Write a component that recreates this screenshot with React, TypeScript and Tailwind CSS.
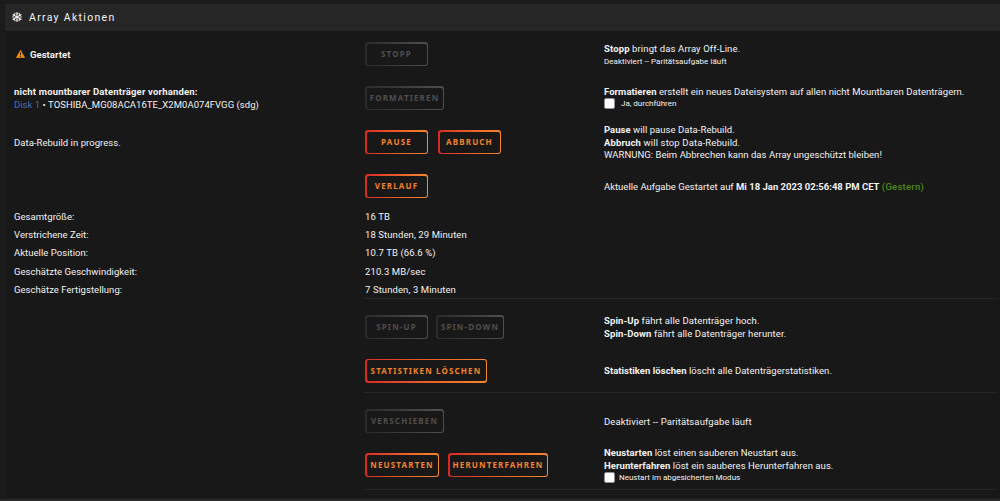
import * as React from "react";
import { clsx } from "clsx";

interface ActionButtonProps {
  children: string;
  width: string;
  disabled?: boolean;
  className?: string;
}

function ActionButton({ children, width, disabled, className }: ActionButtonProps) {
  return (
    <button
      type="button"
      disabled={disabled}
      className={clsx(
        "h-6 shrink-0 rounded-[3px] bg-linear-to-r p-[1.5px] font-['Noto_Sans',sans-serif]",
        disabled ? "from-[#2b2a29] to-[#4f4f4f]" : "from-[#d92626] to-[#f5872d]",
        width,
        className
      )}
    >
      <span
        className={clsx(
          "flex h-full items-center justify-center rounded-[2px] bg-[#191818] text-[8px] leading-none font-bold tracking-[1.15px] whitespace-nowrap",
          disabled ? "text-[#4f4f4f]" : "text-[#f5832b]"
        )}
      >
        {children}
      </span>
    </button>
  );
}

interface RowProps {
  height: string;
  label?: React.ReactNode;
  actions?: React.ReactNode;
  children?: React.ReactNode;
}

function Row({ height, label, actions, children }: RowProps) {
  return (
    <div className={clsx("grid grid-cols-[351px_239px_1fr] items-center whitespace-nowrap", height)}>
      <div>{label}</div>
      <div className="flex items-center">{actions}</div>
      <div>{children}</div>
    </div>
  );
}

function Divider() {
  return <div className="ml-[350px] h-px bg-[#262525]" />;
}

function Checkbox({ label, gap }: { label: string; gap: string }) {
  return (
    <label className={clsx("flex h-3 items-center text-[8px] leading-3 tracking-normal", gap)}>
      <span className="size-[11px] rounded-[2px] border border-[#8f8f9d] bg-white" />
      {label}
    </label>
  );
}

const stats = [
  { label: "Gesamtgröße:", value: "16 TB" },
  { label: "Verstrichene Zeit:", value: "18 Stunden, 29 Minuten" },
  { label: "Aktuelle Position:", value: "10.7 TB (66.6 %)" },
  { label: "Geschätzte Geschwindigkeit:", value: "210.3 MB/sec" },
  { label: "Geschätze Fertigstellung:", value: "7 Stunden, 3 Minuten" },
];

export default function App() {
  return (
    <div className="h-[501px] w-[1000px] overflow-hidden bg-[#1c1b1b] pt-1 pl-[5px] font-[Roboto,sans-serif] text-[9.5px] leading-[13px] tracking-[0.04px] text-[#f2f2f2]">
      <div className="h-[494px] bg-[#191818]">
        <header className="flex h-[27px] items-center gap-[7px] bg-[#262626] pb-px pl-[7px] text-[10.5px] leading-[14px] tracking-[1.3px]">
          <svg viewBox="0 0 20 20" className="size-[10px]" fill="none" stroke="currentColor" strokeWidth="2">
            {[0, 60, 120].map((angle) => (
              <path
                key={angle}
                transform={`rotate(${angle} 10 10)`}
                d="M10 0v20M6.500 1.500 10 5l3.500-3.500M6.500 18.500 10 15l3.500 3.500"
              />
            ))}
          </svg>
          <span className="pt-px">Array Aktionen</span>
        </header>

        <div className="pr-[2px] pl-[9px]">
          <Row
            height="h-[46px]"
            label={
              <div className="flex items-center gap-[5px] pl-[2px]">
                <svg viewBox="0 0 18 16" className="h-[8px] w-[9px]">
                  <path d="M9 0.500 17.500 15.500H0.500Z" fill="#ff9100" stroke="#ff9100" strokeLinejoin="round" />
                  <path d="M8 5h2v5.500H8zM8 12h2v2H8z" fill="#191818" />
                </svg>
                <b>Gestartet</b>
              </div>
            }
            actions={<ActionButton width="w-[63px]" disabled>STOPP</ActionButton>}
          >
            <p className="pt-px tracking-[0.12px]"><b>Stopp</b> bringt das Array Off-Line.</p>
            <p className="text-[8px]">Deaktiviert -- Paritätsaufgabe läuft</p>
          </Row>
          <Row
            height="h-[42px]"
            label={
              <>
                <p className="tracking-[0.18px]"><b>nicht mountbarer Datenträger vorhanden:</b></p>
                <p><span className="text-[#486dba]">Disk 1</span> • TOSHIBA_MG08ACA16TE_X2M0A074FVGG (sdg)</p>
              </>
            }
            actions={<ActionButton width="w-[79px]" disabled>FORMATIEREN</ActionButton>}
          >
            <div className="-mt-[2px]">
              <p className="tracking-[0.05px]"><b>Formatieren</b> erstellt ein neues Dateisystem auf allen nicht Mountbaren Datenträgern.</p>
              <Checkbox label="Ja, durchführen" gap="gap-[6px]" />
            </div>
          </Row>
          <Row
            height="h-[46px]"
            label="Data-Rebuild in progress."
            actions={
              <>
                <ActionButton width="w-[63px]">PAUSE</ActionButton>
                <ActionButton width="w-[63px]" className="ml-[10px]">ABBRUCH</ActionButton>
              </>
            }
          >
            <p><b>Pause</b> will pause Data-Rebuild.</p>
            <p className="tracking-[0.13px]"><b>Abbruch</b> will stop Data-Rebuild.</p>
            <p className="leading-3">WARNUNG: Beim Abbrechen kann das Array ungeschützt bleiben!</p>
          </Row>
          <Row height="h-[42px]" actions={<ActionButton width="w-[63px]">VERLAUF</ActionButton>}>
            <p className="tracking-normal">
              Aktuelle Aufgabe Gestartet auf <b>Mi 18 Jan 2023 02:56:48 PM CET</b>{" "}
              <span className="font-medium tracking-[0.25px] text-[#4f8a10]">(Gestern)</span>
            </p>
          </Row>

          <div className="h-[91px]">
            {stats.map(({ label, value }) => (
              <Row key={label} height="h-[18.300px]" label={label} actions={<span className="tracking-[0.1px]">{value}</span>} />
            ))}
          </div>

          <Divider />
          <Row
            height="h-[56px]"
            actions={
              <>
                <ActionButton width="w-[63px]" disabled>SPIN-UP</ActionButton>
                <ActionButton width="w-[68px]" className="ml-2" disabled>SPIN-DOWN</ActionButton>
              </>
            }
          >
            <p className="tracking-[0.1px]"><b>Spin-Up</b> fährt alle Datenträger hoch.</p>
            <p className="tracking-[0.1px]"><b>Spin-Down</b> fährt alle Datenträger herunter.</p>
          </Row>
          <Row height="h-[31px]" actions={<ActionButton width="w-[122px]">STATISTIKEN LÖSCHEN</ActionButton>}>
            <p><b>Statistiken löschen</b> löscht alle Datenträgerstatistiken.</p>
          </Row>
          <div className="h-[6px]" />
          <Divider />
          <Row height="h-[56px]" actions={<ActionButton width="w-[79px]" disabled>VERSCHIEBEN</ActionButton>}>
            <p className="tracking-[0.1px]">Deaktiviert -- Paritätsaufgabe läuft</p>
          </Row>
          <Row
            height="h-8"
            actions={
              <>
                <ActionButton width="w-[74px]">NEUSTARTEN</ActionButton>
                <ActionButton width="w-[100px]" className="ml-[9px]">HERUNTERFAHREN</ActionButton>
              </>
            }
          >
            <div className="-my-1 pb-px">
              <p className="tracking-[0.06px]"><b>Neustarten</b> löst einen sauberen Neustart aus.</p>
              <p className="tracking-[0.06px]"><b>Herunterfahren</b> löst ein sauberes Herunterfahren aus.</p>
              <Checkbox label="Neustart im abgesicherten Modus" gap="gap-[4px]" />
            </div>
          </Row>
        </div>
      </div>
      {/* closing rule and page footer edge sit just below the last row */}
      <div className="-mt-[9px] pr-[2px] pl-[9px]">
        <Divider />
      </div>
      <footer className="mt-[9px] -ml-[5px] h-[2px] bg-[#2b2a29]" />
    </div>
  );
}
